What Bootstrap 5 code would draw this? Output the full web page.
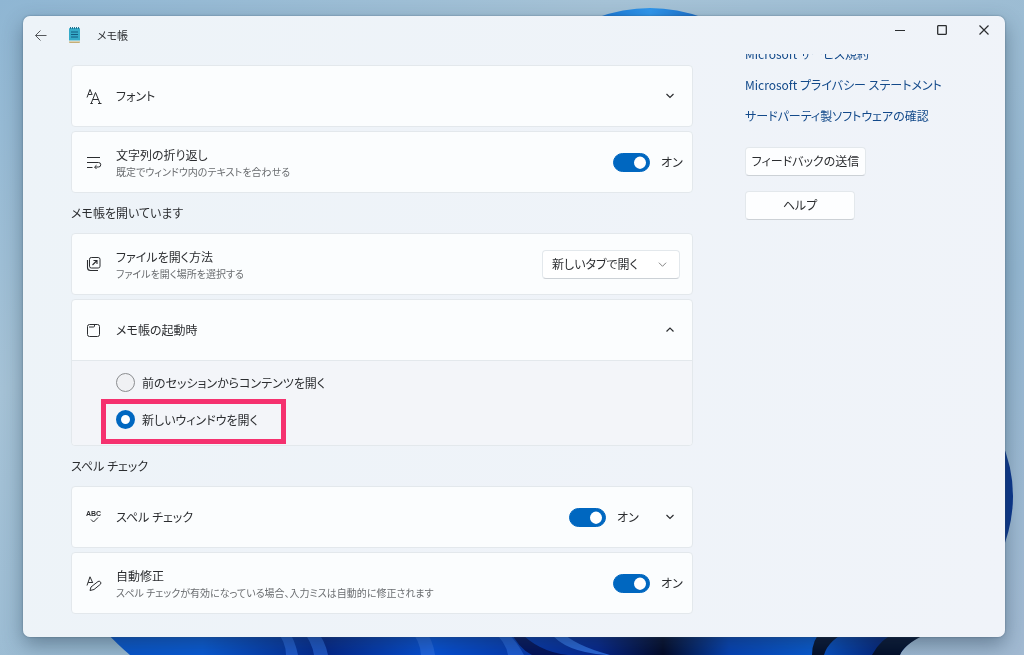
<!DOCTYPE html>
<html lang="ja">
<head>
<meta charset="utf-8">
<meta name="viewport" content="width=device-width, initial-scale=1">
<title>メモ帳</title>
<link href="https://cdn.jsdelivr.net/npm/bootstrap@5.3.0/dist/css/bootstrap.min.css" rel="stylesheet">
<style>
  :root { --accent: #0067c0; --ink: #2b2d30; --line: #e3e8ec; }
  body {
    font-family: "Noto Sans CJK JP", sans-serif;
    font-feature-settings: "palt";
    font-size: 12px; line-height: 18px; color: var(--ink);
    background: #9ab8cf;
    padding: 16px 19px 18px 23px;
  }
  button, select { font-feature-settings: inherit; }
  svg { display: block; fill: none; stroke: currentColor; flex: none; }
  .wallpaper { z-index: -1; stroke: none; }
  .app-window {
    background: linear-gradient(100deg, #edf3f8, #f0f3f9);
    border-radius: 7px;
    box-shadow: 0 0 2px #34495e99, 0 8px 20px #23394d70;
  }
  .titlebar { height: 38px; }
  .back-btn, .caption-btn { color: #2b2d30; border: 0; padding: 0; border-radius: 0; }
  .back-btn { width: 36px; height: 38px; color: #55585c; }
  .app-name { font-size: 11px; }
  .caption-btn { width: 42px; height: 28px; }
  .page-main { padding: 11px 0 22px 48px; }
  .page-side { width: 260px; margin-left: 52px; }
  .section-title { font-size: 12px; line-height: 18px; padding: 11px 0; margin: 0; font-weight: 400; }
  .setting { background: #fbfdfe; border: 1px solid var(--line); border-radius: 4px; margin-bottom: 4px; }
  .setting:last-child { margin-bottom: 0; }
  .setting-row { min-height: 60px; padding: 0 12px 0 14px; }
  .setting-icon { width: 30px; }
  .desc { font-size: 10px; line-height: 15px; color: #6a6d70; }
  .chev { padding: 0; border: 0; width: 20px; height: 24px; color: var(--ink); }
  .form-switch .form-check-input {
    width: 37px; height: 19px; margin: 0; float: none;
    background-color: var(--accent); border-color: var(--accent);
    background-size: 18px 18px;
    background-image: url("data:image/svg+xml,%3csvg xmlns='http://www.w3.org/2000/svg' viewBox='-9 -9 18 18'%3e%3ccircle r='6' fill='white'/%3e%3c/svg%3e") !important;
  }
  .form-switch { padding: 0; margin: 0; min-height: 0; gap: 11px; }
  .switch-text { width: 19px; white-space: nowrap; }
  .open-select {
    width: 138px; height: 29px; padding: 0 28px 0 9px; font-size: 12px; color: var(--ink);
    background-color: #fff; border: 1px solid var(--line); border-bottom-color: #ccd1d6;
    background-image: url("data:image/svg+xml,%3csvg xmlns='http://www.w3.org/2000/svg' viewBox='0 0 10 10'%3e%3cpath d='M1 3l4 4 4-4' fill='none' stroke='%23777'/%3e%3c/svg%3e");
    background-size: 9px 9px; background-position: right 12px center; border-radius: 4px;
  }
  .options { background: #f3f5f9; border-top: 1px solid var(--line); padding: 3px 0 7px 44px; border-radius: 0 0 4px 4px; }
  .option { height: 37px; gap: 7px; padding-right: 28px; margin: 0; min-height: 0; }
  .option .form-check-input { width: 19px; height: 19px; margin: 0; float: none; background-color: #f0f1f4; border-color: #8b8d90; }
  .option .form-check-input:checked { background: #fff; border: 5px solid var(--accent); }
  .callout-frame { inset: -2px 0 -6px -15px; border: 5px solid #f5316f; pointer-events: none; }
  .side-links { margin-top: -12px; gap: 7px; }
  .side-links a { color: #12498a; line-height: 24px; text-decoration: none; }
  .side-btn {
    height: 29px; padding: 0 0 2px; font-size: 12px; line-height: 18px; color: var(--ink); white-space: nowrap;
    background: #fdfeff; border: 1px solid var(--line); border-bottom-color: #ccd1d6; border-radius: 4px;
  }
  .feedback-btn { width: 121px; margin-top: 19px; }
  .help-btn { width: 110px; margin-top: 15px; }
</style>
</head>
<body class="min-vh-100 d-flex">
<svg class="wallpaper position-fixed top-0 start-0 w-100 h-100" viewBox="0 0 1024 655" preserveAspectRatio="none" aria-hidden="true">
  <defs>
    <linearGradient id="sky" x1="0" y1="0" x2="1" y2="1"><stop offset="0" stop-color="#8fb6d3"/><stop offset=".3" stop-color="#a5c2d6"/><stop offset=".7" stop-color="#94b7d1"/><stop offset="1" stop-color="#a2bad2"/></linearGradient>
    <linearGradient id="petal"><stop offset="0" stop-color="#0754c9"/><stop offset=".12" stop-color="#0759d5"/><stop offset=".27" stop-color="#02258a"/><stop offset=".4" stop-color="#0450d8"/><stop offset=".6" stop-color="#04258e"/><stop offset=".68" stop-color="#020826"/><stop offset=".76" stop-color="#0441b4"/><stop offset=".86" stop-color="#0759d0"/><stop offset=".94" stop-color="#032781"/><stop offset="1" stop-color="#04163d"/></linearGradient>
    <linearGradient id="crest"><stop offset="0" stop-color="#1773d2"/><stop offset=".5" stop-color="#3097ed"/><stop offset="1" stop-color="#1768c4"/></linearGradient>
  </defs>
  <rect width="1024" height="655" fill="url(#sky)"/>
  <path d="M596 18Q650-2 704 18z" fill="url(#crest)"/>
  <path d="M1000 438Q1026 495 1000 556z" fill="#0b358c"/>
  <path d="M104 630Q118 645 130 655H900Q902 648 926 630z" fill="url(#petal)"/>
  <path d="M276 630q10 12 10 25h12q-3-15-10-25zM302 630q10 12 12 25h14q-3-15-12-25zM410 630q10 10 11 25h14q-2-15-10-25zM492 630q14 12 16 25h16q-8-15-20-25z" fill="#2d6fe8" opacity=".6"/>
  <path d="M518 630q20 22 50 25h-36q-14-7-22-25z" fill="#02115a"/>
  <path d="M550 632q14 20 56 23h4q-36-10-48-23z" fill="#2865d8"/>
  <path d="M822 630q-10 10-10 25h12q4-15 26-25zM900 630q-20 9-28 25h28q2-9 24-20z" fill="#030f2b"/>
</svg>

<div class="app-window flex-grow-1 d-flex flex-column overflow-hidden">
  <header class="titlebar d-flex">
    <button class="btn back-btn d-flex align-items-center justify-content-center" type="button" aria-label="戻る">
      <svg width="12" height="12" viewBox="0 0 12 12"><path d="M.5 6.500h11M5.500 1.500l-5 5 5 5"/></svg>
    </button>
    <div class="d-flex align-items-center flex-grow-1 ps-2">
      <svg width="14" height="18" viewBox="0 0 14 18" stroke-width="0">
        <rect x="2" y="2" width="11" height="14" rx="1" fill="#35abc9"/>
        <path d="M2 15h11v1a1 1 0 0 1-1 1H3a1 1 0 0 1-1-1z" fill="#c5ae76"/>
        <path d="M2 14.500h11v1H2z" fill="#eef5f4"/>
        <path d="M4 6h7M4 8.500h7M4 11h7" stroke="#125d82" stroke-width="1"/>
        <path d="M3.500 1v2M5.500 1v2M7.500 1v2M9.500 1v2M11.500 1v2" stroke="#1d7594" stroke-width="1"/>
      </svg>
      <span class="app-name ms-3 lh-1 flex-grow-1">メモ帳</span>
    </div>
    <div class="d-flex">
      <button class="btn caption-btn d-flex align-items-center justify-content-center" type="button" aria-label="最小化"><svg width="10" height="10" viewBox="0 0 10 10"><path d="M0 5.500h10"/></svg></button>
      <button class="btn caption-btn d-flex align-items-center justify-content-center" type="button" aria-label="最大化"><svg width="10" height="10" viewBox="0 0 10 10"><rect x=".7" y=".7" width="8.600" height="8.600" rx=".5" stroke-width="1.300"/></svg></button>
      <button class="btn caption-btn d-flex align-items-center justify-content-center" type="button" aria-label="閉じる"><svg width="10" height="10" viewBox="0 0 10 10"><path d="M.5.500l9 9M9.500.500l-9 9" stroke-width="1.200"/></svg></button>
    </div>
  </header>

  <div class="d-flex flex-grow-1 overflow-hidden">
    <main class="page-main flex-grow-1">
      <section>
        <div class="setting">
          <div class="setting-row d-flex align-items-center">
            <div class="setting-icon"><svg width="16" height="17" viewBox="0 0 16 17"><path d="M1 9.500L4 1.500l2.200 5.200M2.200 6.500h3.600M5.300 15l4.200-10.500L13.800 15M7 11.500h5.200M4.300 15.500h2.500M12 15.500h3.500"/></svg></div>
            <div class="flex-grow-1">フォント</div>
            <button class="btn chev d-flex align-items-center justify-content-center" type="button" aria-label="フォントを展開"><svg width="8" height="8" viewBox="0 0 8 8"><path d="M.5 2L4 5.500 7.500 2" stroke-width="1.200"/></svg></button>
          </div>
        </div>
        <div class="setting">
          <div class="setting-row d-flex align-items-center">
            <div class="setting-icon"><svg width="16" height="14" viewBox="0 0 16 14"><path d="M1 2.500h13M1 7.500h11.500a2.200 2.200 0 0 1 0 4.500H9M1 12.500h5.500M10.500 10.200L8.500 12l2 2"/></svg></div>
            <div class="flex-grow-1"><label for="wrap" class="d-block">文字列の折り返し</label><div class="desc">既定でウィンドウ内のテキストを合わせる</div></div>
            <div class="form-check form-switch d-flex align-items-center"><input class="form-check-input" type="checkbox" role="switch" id="wrap" checked><label class="switch-text" for="wrap">オン</label></div>
          </div>
        </div>
      </section>

      <section>
        <h2 class="section-title">メモ帳を開いています</h2>
        <div class="setting">
          <div class="setting-row d-flex align-items-center">
            <div class="setting-icon"><svg width="16" height="16" viewBox="0 0 16 16"><rect x="3.500" y="1.500" width="10.500" height="10.500" rx="1.800"/><path d="M1.500 4v7.500a3 3 0 0 0 3 3H12M6.500 9l4.500-4.500M7.500 4.500H11V8" stroke-width="1.100"/></svg></div>
            <div class="flex-grow-1"><label for="open-mode" class="d-block">ファイルを開く方法</label><div class="desc">ファイルを開く場所を選択する</div></div>
            <select class="form-select open-select" id="open-mode"><option>新しいタブで開く</option></select>
          </div>
        </div>
        <div class="setting">
          <div class="setting-row d-flex align-items-center">
            <div class="setting-icon"><svg width="16" height="16" viewBox="0 0 16 16"><rect x="1.500" y="2.500" width="12" height="12" rx="2"/><path d="M3 5h4.500a1 1 0 0 0 1-1V2.500"/></svg></div>
            <div class="flex-grow-1" id="startup-label">メモ帳の起動時</div>
            <button class="btn chev d-flex align-items-center justify-content-center" type="button" aria-label="メモ帳の起動時を折りたたむ"><svg width="8" height="8" viewBox="0 0 8 8"><path d="M.5 5.500L4 2l3.500 3.500" stroke-width="1.200"/></svg></button>
          </div>
          <div class="options d-flex flex-column align-items-start" role="radiogroup" aria-labelledby="startup-label">
            <div class="option d-flex align-items-center"><input class="form-check-input" type="radio" name="startup" id="resume"><label for="resume">前のセッションからコンテンツを開く</label></div>
            <div class="option d-flex align-items-center position-relative"><input class="form-check-input" type="radio" name="startup" id="fresh" checked><label for="fresh">新しいウィンドウを開く</label><span class="callout-frame position-absolute"></span></div>
          </div>
        </div>
      </section>

      <section>
        <h2 class="section-title">スペル チェック</h2>
        <div class="setting">
          <div class="setting-row d-flex align-items-center">
            <div class="setting-icon"><svg width="16" height="16" viewBox="0 0 16 16"><text x="0" y="7" font-family="Liberation Sans, sans-serif" font-weight="700" font-size="7" fill="currentColor" stroke="none">ABC</text><path d="M5 10.500l2.500 2.500L12 8.500"/></svg></div>
            <label class="flex-grow-1" for="spell">スペル チェック</label>
            <div class="form-check form-switch d-flex align-items-center"><input class="form-check-input" type="checkbox" role="switch" id="spell" checked><label class="switch-text" for="spell">オン</label></div>
            <button class="btn chev d-flex align-items-center justify-content-center ms-4" type="button" aria-label="スペル チェックを展開"><svg width="8" height="8" viewBox="0 0 8 8"><path d="M.5 2L4 5.500 7.500 2" stroke-width="1.200"/></svg></button>
          </div>
        </div>
        <div class="setting">
          <div class="setting-row d-flex align-items-center">
            <div class="setting-icon"><svg width="16" height="17" viewBox="0 0 16 17"><path d="M1 10.500L4 1.800 6.800 8M2.200 7.500h4M4 15.500l1-3.500 7-5.500a1.900 1.900 0 0 1 2.600 2.600L8 14.500l-4 1z"/></svg></div>
            <div class="flex-grow-1"><label for="autofix" class="d-block">自動修正</label><div class="desc">スペル チェックが有効になっている場合、入力ミスは自動的に修正されます</div></div>
            <div class="form-check form-switch d-flex align-items-center"><input class="form-check-input" type="checkbox" role="switch" id="autofix" checked><label class="switch-text" for="autofix">オン</label></div>
          </div>
        </div>
      </section>
    </main>

    <aside class="page-side flex-shrink-0">
      <nav class="side-links d-flex flex-column align-items-start">
        <a href="#">Microsoft サービス規約</a>
        <a href="#">Microsoft プライバシー ステートメント</a>
        <a href="#">サードパーティ製ソフトウェアの確認</a>
      </nav>
      <button class="btn side-btn feedback-btn d-block" type="button">フィードバックの送信</button>
      <button class="btn side-btn help-btn d-block" type="button">ヘルプ</button>
    </aside>
  </div>
</div>
<script src="https://cdn.jsdelivr.net/npm/bootstrap@5.3.0/dist/js/bootstrap.bundle.min.js"></script>
</body>
</html>
